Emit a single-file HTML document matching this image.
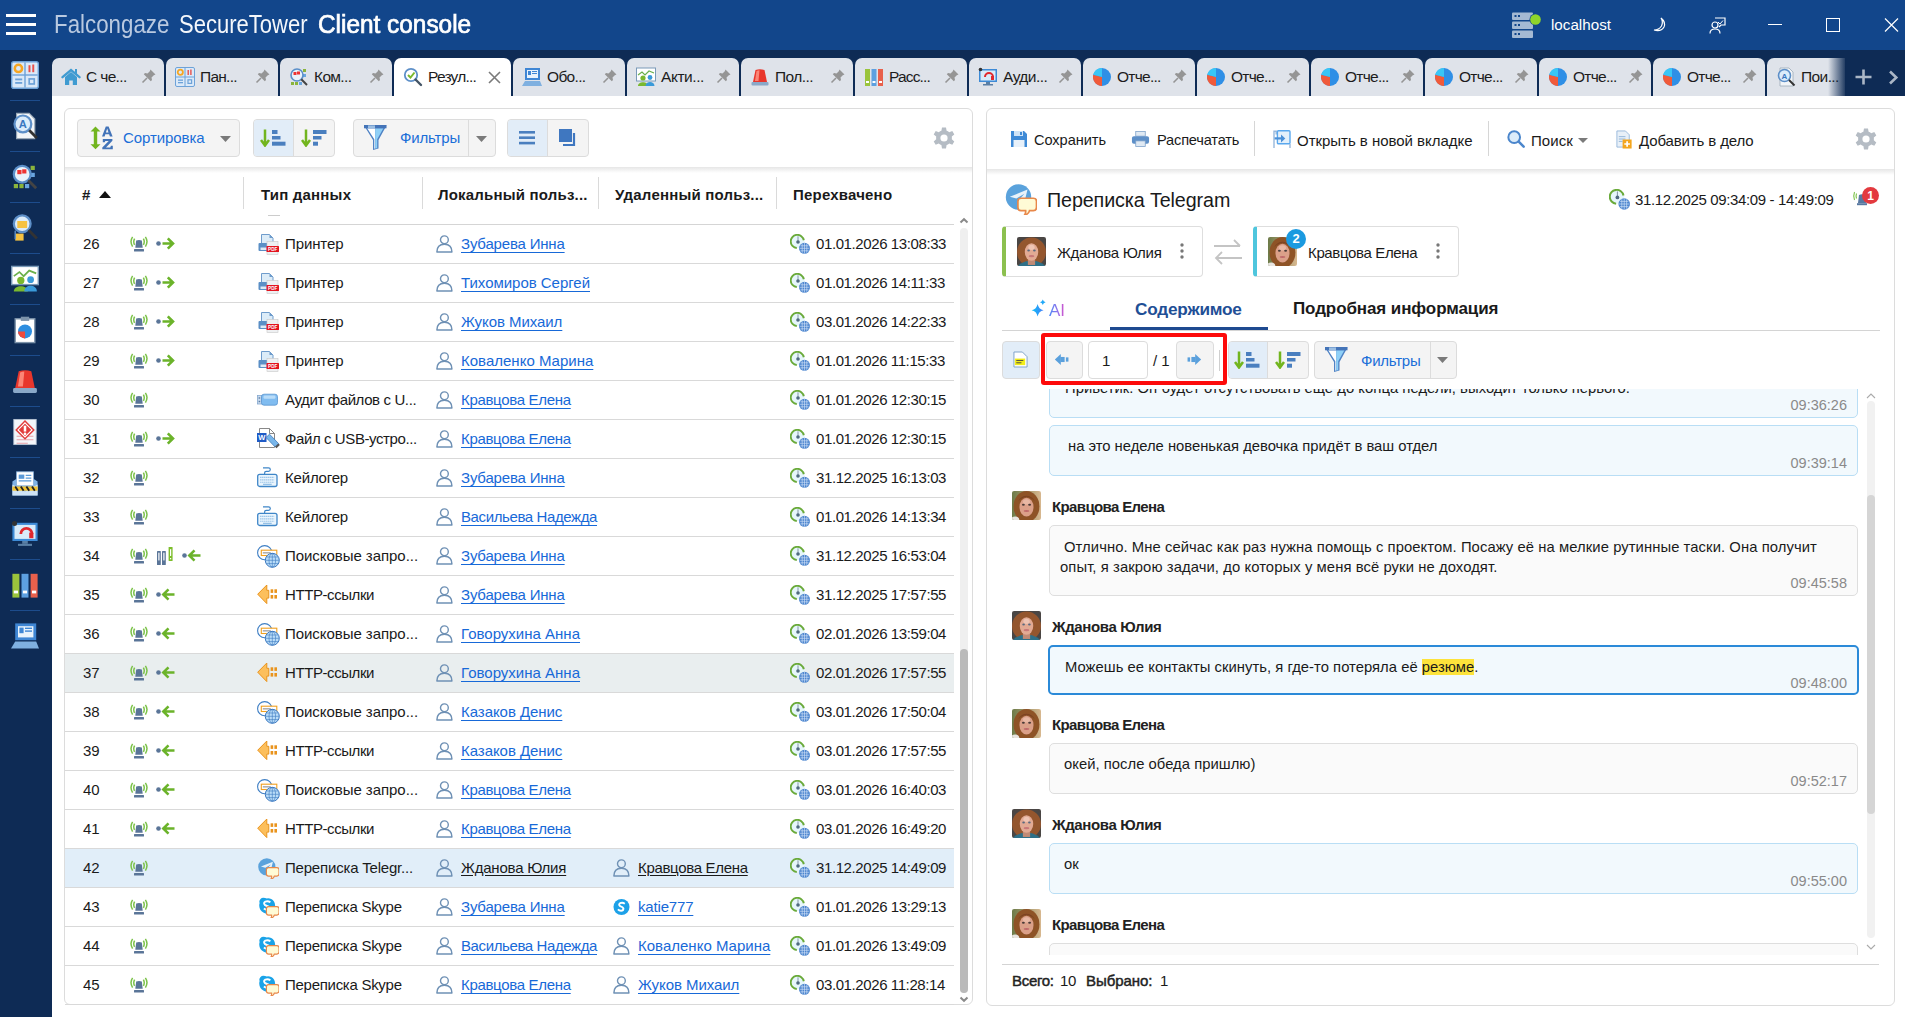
<!DOCTYPE html>
<html><head><meta charset="utf-8"><style>
*{box-sizing:border-box}
html,body{margin:0;padding:0}
body{width:1905px;height:1017px;overflow:hidden;position:relative;background:#fff;font-family:"Liberation Sans",sans-serif;color:#1a1a1a}
.a{position:absolute}
.nw{white-space:nowrap}
svg.i{position:absolute;overflow:visible}
#title{left:0;top:0;width:1905px;height:50px;background:#12468b}
#strip{left:0;top:50px;width:1905px;height:46px;background:#0e2b55}
#side{left:0;top:50px;width:52px;height:967px;background:#0e2b55}
.tab{position:absolute;top:58px;height:38px;background:#dfe3ea;border-radius:7px 7px 0 0;font-size:15.5px;color:#1c1c1c}
.tab.act{background:#fff}
.tab .tx{position:absolute;left:34px;top:10px;white-space:nowrap;letter-spacing:-0.2px}
.panel{position:absolute;background:#fff;border:1px solid #dcdcdc;border-radius:6px}
.sidesep{position:absolute;left:10px;width:30px;height:1px;background:#1d4c8c}
.btn{position:absolute;border:1px solid #dcdcdc;border-radius:4px;background:#f4f4f4}
.btn.sel{background:#e2edf8}
.row{position:absolute;left:1px;width:888px;height:39px;border-bottom:1px solid #d9d9d9;font-size:15px}
.row .c{position:absolute;top:10px;white-space:nowrap}
.lnk{color:#1769d8;text-decoration:underline;text-underline-offset:3px}
.hdr{position:absolute;top:0;font-size:15px;font-weight:bold;color:#1a1a1a;white-space:nowrap}
.tb{position:absolute;font-size:15px;white-space:nowrap;color:#1a1a1a}
.bub{position:absolute;left:1049px;width:809px;border:1px solid #b9def5;background:#f2f9fd;border-radius:5px;font-size:14.8px}
.bub.g{border-color:#dedede;background:#fafafa}
.bub .t{position:absolute;right:10px;font-size:14.5px;color:#8a8a8a}
.bub .m{position:absolute;left:18px;white-space:nowrap;letter-spacing:0.06px}
.who{position:absolute;left:1052px;font-size:15px;font-weight:bold;color:#222;white-space:nowrap;letter-spacing:-0.5px}
.av{position:absolute;left:1013px;width:29px;height:29px;border-radius:4px;overflow:hidden}
</style></head>
<body>

<svg width="0" height="0" style="position:absolute">
<defs><filter id="blr" x="-20%" y="-20%" width="140%" height="140%"><feGaussianBlur stdDeviation="0.75"/></filter><linearGradient id="kbg" x1="0" y1="0" x2="1" y2="0"><stop offset="0" stop-color="#6c7a48"/><stop offset="1" stop-color="#d8b890"/></linearGradient>
<symbol id="home" viewBox="0 0 20 20"><path d="M1.5 10.2 L10 3 L18.5 10.2" fill="none" stroke="#3f9bd1" stroke-width="2.3" stroke-linecap="round"/><rect x="14" y="2" width="2" height="5" fill="#3f9bd1"/><path d="M4 10 L10 5 L16 10 V18 H11.8 V13.5 H8.2 V18 H4Z" fill="#3f9bd1"/></symbol>
<symbol id="dash" viewBox="0 0 20 20"><rect x="0.5" y="0.5" width="19" height="19" rx="1.5" fill="#dbe9f8" stroke="#6da2d8"/><line x1="10" y1="1" x2="10" y2="19" stroke="#6da2d8"/><line x1="1" y1="10" x2="19" y2="10" stroke="#6da2d8"/><circle cx="5.3" cy="5.3" r="2.6" fill="none" stroke="#f5a623" stroke-width="1.8"/><rect x="12.5" y="3" width="1.4" height="5" fill="#e8504a"/><rect x="15.2" y="2.5" width="1.4" height="5.5" fill="#e8504a"/><rect x="3" y="12.5" width="5" height="1.3" fill="#6da2d8"/><rect x="3" y="15" width="5" height="1.3" fill="#6da2d8"/><rect x="13" y="12.8" width="3.6" height="3.6" fill="none" stroke="#6da2d8" stroke-width="1.2"/></symbol>
<symbol id="anl" viewBox="0 0 20 20"><rect x="2" y="15" width="3" height="3" fill="#8ab43c"/><rect x="6" y="15" width="3" height="3" fill="#8ab43c"/><rect x="14" y="2" width="3" height="3" fill="#8ab43c"/><rect x="14" y="7" width="3" height="3" fill="#6aa6e0"/><rect x="10" y="15" width="3" height="3" fill="#6aa6e0"/><circle cx="8" cy="8" r="6" fill="#e9f2fb" stroke="#5b8fc9" stroke-width="1.6"/><rect x="4.5" y="5" width="3" height="3" fill="#e33"/><rect x="8" y="4.5" width="3" height="3" fill="#e33"/><line x1="12.3" y1="12.3" x2="18" y2="18" stroke="#444" stroke-width="2"/></symbol>
<symbol id="srchk" viewBox="0 0 20 20"><circle cx="8" cy="8" r="6.2" fill="#fff" stroke="#5d8fc8" stroke-width="1.8"/><path d="M5 8 L7.5 10.5 L11.5 5.5" fill="none" stroke="#7ab82f" stroke-width="2"/><line x1="12.5" y1="12.5" x2="18" y2="18" stroke="#456" stroke-width="2.4" stroke-linecap="round"/></symbol>
<symbol id="laptop" viewBox="0 0 20 20"><rect x="3" y="1" width="15" height="12" fill="#3f86d4"/><rect x="5" y="3" width="11" height="8" fill="#e9f3fc"/><rect x="6" y="4" width="3" height="4" fill="#3f86d4"/><rect x="10" y="4" width="5" height="1" fill="#3f86d4"/><rect x="10" y="6" width="5" height="1" fill="#3f86d4"/><path d="M0 19 L3 14 H18 L20 19Z" fill="#7fb0e0"/></symbol>
<symbol id="pres" viewBox="0 0 20 20"><rect x="0.5" y="1" width="19" height="13" fill="#fff" stroke="#7a9ab8"/><path d="M2 8 L6 5 L9 8 L13 4 L18 6" fill="none" stroke="#6ab04c" stroke-width="1.2"/><circle cx="7" cy="11" r="2.6" fill="#7ab82f"/><path d="M2 19 C2 14 12 14 12 19Z" fill="#7ab82f"/><circle cx="14" cy="10.5" r="2.4" fill="#3a9ad9"/><path d="M9.5 19 C9.5 13.5 18.5 13.5 18.5 19Z" fill="#3a9ad9"/></symbol>
<symbol id="siren" viewBox="0 0 20 20"><path d="M3 15 L5.5 3 Q10 1.5 14.5 3 L17 15Z" fill="#e8362c"/><path d="M6.5 4 Q8 3.3 9.5 3.3 L8.5 14 H5Z" fill="#ff9a8a" opacity="0.8"/><rect x="1.5" y="15" width="17" height="3.5" rx="1" fill="#8aa8c8"/></symbol>
<symbol id="books" viewBox="0 0 20 20"><rect x="1" y="2" width="5" height="17" fill="#9ac43c"/><rect x="7.5" y="2" width="5" height="17" fill="#5da0e0"/><rect x="14" y="2" width="5" height="17" fill="#e8604c"/><rect x="2" y="14" width="3" height="2" fill="#fff"/><rect x="8.5" y="14" width="3" height="2" fill="#fff"/><rect x="15" y="14" width="3" height="2" fill="#fff"/></symbol>
<symbol id="mon" viewBox="0 0 20 20"><rect x="1" y="2" width="18" height="13" fill="#3d8ad6"/><rect x="2.5" y="3.5" width="15" height="10" fill="#d9ebf9"/><rect x="8" y="15" width="4" height="2" fill="#5a7fa5"/><rect x="5" y="17" width="10" height="1.5" fill="#5a7fa5"/><path d="M7 10 A4 4 0 1 1 15 10" fill="none" stroke="#e0282e" stroke-width="2"/><rect x="13" y="9" width="3" height="4" fill="#e0282e"/><circle cx="2.5" cy="2.5" r="1.8" fill="#333"/></symbol>
<symbol id="pie" viewBox="0 0 20 20"><circle cx="10" cy="10" r="9" fill="#2f8fe6"/><path d="M10 10 L10 19 A9 9 0 0 1 1.3 7.7Z" fill="#f05a3a"/><path d="M10 10 L1.3 7.7 A9 9 0 0 1 10 1Z" fill="#38c6f6"/></symbol>
<symbol id="srdoc" viewBox="0 0 20 20"><path d="M4 1 H13 L17 5 V19 H4Z" fill="#f2f5f8" stroke="#9aa9b8" stroke-width="0.8"/><circle cx="8.5" cy="8.5" r="6" fill="#dcecfa" stroke="#5d8fc8" stroke-width="1.6"/><text x="8.5" y="11.5" font-size="8" font-family="Liberation Sans" font-weight="bold" fill="#3a77c0" text-anchor="middle">A</text><line x1="13" y1="13" x2="18.5" y2="18.5" stroke="#333" stroke-width="2"/></symbol>
<symbol id="pin" viewBox="0 0 16 16"><path d="M9.5 1.5 L14.5 6.5 L12.8 7.2 L10.5 9.5 L11 12 L9.8 13.2 L2.8 6.2 L4 5 L6.5 5.5 L8.8 3.2Z" fill="#959595"/><line x1="6" y1="10" x2="1.5" y2="14.5" stroke="#959595" stroke-width="1.6"/></symbol>
<symbol id="fsr" viewBox="0 0 20 20"><circle cx="8" cy="7" r="6" fill="#dcecfa" stroke="#5d8fc8" stroke-width="1.6"/><rect x="4.5" y="5" width="7" height="5" fill="#f5c242"/><rect x="3" y="14" width="6" height="5" fill="#f5c242"/><line x1="3" y1="12" x2="3" y2="18" stroke="#5d8fc8"/><line x1="12.5" y1="11.5" x2="18.5" y2="17.5" stroke="#333" stroke-width="2"/></symbol>
<symbol id="clip" viewBox="0 0 20 20"><rect x="3" y="2" width="14" height="17" fill="#fff" stroke="#7d93aa"/><rect x="7" y="0.5" width="6" height="3" fill="#7d93aa"/><circle cx="10" cy="11" r="5" fill="#2e8ee0"/><path d="M10 11 L10 16 A5 5 0 0 1 5 11Z" fill="#ef4a3c"/></symbol>
<symbol id="warn" viewBox="0 0 20 20"><rect x="2" y="1" width="16" height="18" fill="#f4f6fa" stroke="#b8c4d4" stroke-width="0.6"/><path d="M4 13 H16 M4 15.5 H16 M4 18 H12" stroke="#e8a0a8" stroke-width="0.8"/><path d="M10 1.5 L17 8.5 L10 15.5 L3 8.5Z" fill="#e23b3b"/><path d="M10 3.5 L15 8.5 L10 13.5 L5 8.5Z" fill="none" stroke="#fff" stroke-width="0.8"/><rect x="9.1" y="5.5" width="1.8" height="4.2" fill="#fff"/><circle cx="10" cy="11.3" r="0.95" fill="#fff"/></symbol>
<symbol id="env" viewBox="0 0 20 20"><path d="M1 9 L10 3 L19 9 V19 H1Z" fill="#7fb2e5"/><rect x="4" y="2" width="12" height="10" fill="#fff" stroke="#8ab0d8" stroke-width="0.6"/><rect x="5.5" y="4" width="4" height="3" fill="#5a9ad8"/><path d="M10.5 4.5 H14.5 M10.5 6.5 H14.5 M5.5 8.5 H14.5" stroke="#5a9ad8" stroke-width="0.9"/><path d="M1 11 L10 16 L19 11 V19 H1Z" fill="#cfe3f6"/><rect x="1" y="12.5" width="18" height="3" fill="#f2c230"/><path d="M3 12.5 L5 15.5 M7 12.5 L9 15.5 M11 12.5 L13 15.5 M15 12.5 L17 15.5" stroke="#222" stroke-width="1.3"/></symbol>
<symbol id="sig" viewBox="0 0 18 16"><path d="M2.6 0.8 Q-0.6 5.5 2.6 10.6 M4.6 2.6 Q2.9 5.7 4.6 8.9 M15.4 0.8 Q18.6 5.5 15.4 10.6 M13.4 2.6 Q15.1 5.7 13.4 8.9" fill="none" stroke="#7cc24a" stroke-width="1.5"/><path d="M5.3 11.8 L6.2 4.4 Q9 3.6 11.8 4.4 L12.7 11.8Z" fill="#5a7598"/><rect x="4" y="13" width="10" height="2.6" rx="0.5" fill="#5a7598"/></symbol>
<symbol id="arR" viewBox="0 0 19 13"><circle cx="2.5" cy="6.5" r="2.3" fill="#5a7598"/><path d="M6.5 6.5 H17 M11.8 1.3 L17 6.5 L11.8 11.7" fill="none" stroke="#6bb32a" stroke-width="2.6"/></symbol>
<symbol id="arL" viewBox="0 0 19 13"><circle cx="2.5" cy="6.5" r="2.3" fill="#5a7598"/><path d="M18.5 6.5 H7.5 M12.5 1.3 L7.3 6.5 L12.5 11.7" fill="none" stroke="#6bb32a" stroke-width="2.6"/></symbol>
<symbol id="bk" viewBox="0 0 16 18"><rect x="0" y="4" width="3.8" height="14" rx="0.6" fill="#5a7598"/><rect x="1.3" y="5.5" width="1.2" height="8" rx="0.6" fill="#fff"/><rect x="5" y="4" width="3.8" height="14" rx="0.6" fill="#5a7598"/><rect x="6.3" y="5.5" width="1.2" height="8" rx="0.6" fill="#fff"/><rect x="11.6" y="0" width="4" height="14" rx="0.6" fill="#7cbd2a"/><rect x="13" y="2" width="1.2" height="7" rx="0.6" fill="#fff"/><rect x="13" y="11" width="1.2" height="1.3" fill="#fff"/></symbol>
<symbol id="prn" viewBox="0 0 21 21"><path d="M3.5 0.5 H11.5 L15 4 V13 H3.5Z" fill="#dcecf8" stroke="#6f9ccc" stroke-width="1"/><path d="M11.5 0.5 V4 H15" fill="#6f9ccc"/><rect x="0.5" y="9" width="11" height="8" rx="1" fill="#5b8fc6"/><rect x="2.5" y="13.5" width="7" height="2.5" fill="#dfeaf5"/><rect x="9" y="7.5" width="11" height="13" fill="#eef0f2" stroke="#c8c8c8" stroke-width="0.6"/><rect x="8.5" y="12" width="12.5" height="6" rx="0.6" fill="#e3141f"/><text x="14.7" y="16.7" font-size="4.6" font-family="Liberation Sans" font-weight="bold" fill="#fff" text-anchor="middle">PDF</text></symbol>
<symbol id="usb" viewBox="0 0 21 21"><rect x="0.5" y="6.5" width="4.5" height="8.5" fill="#c8daee" stroke="#86a8cf" stroke-width="0.8"/><rect x="1.6" y="8.3" width="1.6" height="1.4" fill="#5d7fa5"/><rect x="1.6" y="11.8" width="1.6" height="1.4" fill="#5d7fa5"/><rect x="4.5" y="5.2" width="16" height="11" rx="2.5" fill="#80bcf0" stroke="#5b95d0" stroke-width="0.8"/><rect x="6.5" y="6.6" width="12" height="3.2" rx="1.2" fill="#b9dcf8"/></symbol>
<symbol id="word" viewBox="0 0 23 21"><path d="M2.5 0.5 H12.5 L17.5 5.5 V19.5 H2.5Z" fill="#fff" stroke="#7a7a7a" stroke-width="0.9"/><path d="M12.5 0.5 V5.5 H17.5" fill="none" stroke="#7a7a7a" stroke-width="0.9"/><rect x="0" y="5" width="9.5" height="9" fill="#1f5bc6"/><text x="4.8" y="12.4" font-size="7.5" font-family="Liberation Sans" font-weight="bold" fill="#fff" text-anchor="middle">W</text><path d="M9 9.5 L12.5 6.2 L21.5 15.5 L18 18.8Z" fill="#78b6ea" stroke="#3f78b8" stroke-width="0.8"/><path d="M18 18.8 L21.5 15.5 L22.8 17 L19.5 20.3Z" fill="#555"/></symbol>
<symbol id="kbd" viewBox="0 0 21 21"><path d="M6 0.8 H11.5 Q13.3 0.8 13.3 2.6 Q13.3 4.4 11.5 4.4 H9.2 Q7.6 4.4 7.6 6 V7.3" fill="none" stroke="#3f86c8" stroke-width="1.2"/><rect x="0.7" y="7.3" width="19.3" height="12.2" rx="2" fill="#eaf5fd" stroke="#3f86c8" stroke-width="1.3"/><path d="M3.3 10.4 H17.4 M3.3 12.9 H17.4 M3.3 15.3 H17.4" stroke="#7fb3e0" stroke-width="1.1" stroke-dasharray="1.1 0.9"/><path d="M6 17.3 H14.7" stroke="#7fb3e0" stroke-width="1"/></symbol>
<symbol id="gsr" viewBox="0 0 23 23"><circle cx="7.7" cy="7.7" r="7.1" fill="#fff" stroke="#3f7fc4" stroke-width="1.1"/><rect x="4.3" y="5.2" width="15.5" height="5.3" fill="#fff" stroke="#f0a020" stroke-width="1.1"/><rect x="5.8" y="7" width="8" height="1.6" fill="#b0b0b0"/><circle cx="15.3" cy="15.3" r="7" fill="#b9dcf8" stroke="#3a78c0" stroke-width="1"/><path d="M8.6 15.3 H22 M15.3 8.5 V22 M9.5 12 H21 M9.5 18.6 H21" stroke="#3a78c0" stroke-width="0.6"/><ellipse cx="15.3" cy="15.3" rx="3.3" ry="6.8" fill="none" stroke="#3a78c0" stroke-width="0.6"/></symbol>
<symbol id="orarrow" viewBox="0 0 21 21"><path d="M0.7 10.2 L9.8 1 V6.3 H11.8 V14.1 H9.8 V19.6Z" fill="#fcbf5c" stroke="#e9931c" stroke-width="1"/><rect x="13.6" y="5.3" width="2.6" height="3.6" fill="#e9931c"/><rect x="17.4" y="5.3" width="2.6" height="3.6" fill="#e9931c"/><rect x="13.6" y="11" width="2.6" height="3.6" fill="#e9931c"/><rect x="17.4" y="11" width="2.6" height="3.6" fill="#e9931c"/></symbol>
<symbol id="tg" viewBox="0 0 20 20"><circle cx="8.4" cy="8.4" r="8.2" fill="#5aa2dc"/><path d="M2.8 8.2 L14.2 3.6 L12 12.5 L8.6 10.3 L12.2 6.3 L7 9.4Z" fill="#e8f2fa"/><path d="M10 9.2 H18 Q20 9.2 20 11.2 V15 Q20 17.2 18 17.2 H15.5 Q15 19.5 12.3 20 Q13.2 18.8 13 17.2 H10 Q8 17.2 8 15 V11.2 Q8 9.2 10 9.2Z" fill="#fffbd6" stroke="#e8884a" stroke-width="1.1"/></symbol>
<symbol id="sk" viewBox="0 0 20 20"><path d="M5 0.6 Q7 0.6 8.4 1.4 Q10.5 1 12.6 2 Q16 3.6 16.3 8 Q16.5 9.5 16 10.6 Q17 13 15 15 Q13 16.5 10.6 15.6 Q8 16.2 5.5 15 Q1.4 13 1.2 8.6 Q1 7.4 1.5 6 Q0.5 3.6 2.4 1.8 Q3.5 0.6 5 0.6Z" fill="#1aa3e8"/><path d="M11.8 5 Q9.5 3.5 7 4.4 Q5 5.5 6.4 7.4 Q8.5 8.6 10.2 9.3 Q11.5 10.5 10 11.8 Q7.8 12.6 5.6 11" fill="none" stroke="#fff" stroke-width="1.9"/><path d="M10 9.2 H18 Q20 9.2 20 11.2 V15 Q20 17.2 18 17.2 H15.5 Q15 19.5 12.3 20 Q13.2 18.8 13 17.2 H10 Q8 17.2 8 15 V11.2 Q8 9.2 10 9.2Z" fill="#fffbd6" stroke="#e8884a" stroke-width="1.1"/></symbol>
<symbol id="sks" viewBox="0 0 18 18"><circle cx="9" cy="9" r="8.5" fill="#1da1e8"/><path d="M12.5 5.5 Q10 3.8 7.5 5 Q5.5 6.3 7.5 8 Q10.5 9 11 10.5 Q11 13 8.5 13 Q6.5 13 5.2 11.5" fill="none" stroke="#fff" stroke-width="2"/></symbol>
<symbol id="usr" viewBox="0 0 17 18"><circle cx="8.4" cy="4.8" r="3.9" fill="none" stroke="#6f91b5" stroke-width="1.4"/><path d="M0.9 17 Q0.9 9.2 8.4 9.2 Q15.9 9.2 15.9 17Z" fill="none" stroke="#6f91b5" stroke-width="1.5" stroke-linejoin="round"/></symbol>
<symbol id="clk" viewBox="0 0 20 20"><circle cx="8" cy="7.5" r="6.6" fill="#e6f6fb"/><path d="M13.8 6.2 A6.6 6.6 0 1 0 6.8 14" fill="none" stroke="#6aaa3a" stroke-width="1.9"/><path d="M8 2.3 V7.5" stroke="#7a8a9a" stroke-width="0.9"/><circle cx="8" cy="8" r="1.8" fill="#4f6a80"/><circle cx="14.5" cy="14.3" r="5.5" fill="#4d86cf"/><path d="M9.5 14.3 H19.5 M14.5 9 V19.5 M10.5 11.8 H18.5 M10.5 16.8 H18.5 M12.2 9.8 V18.8 M16.8 9.8 V18.8" stroke="#d6e6f8" stroke-width="0.6"/></symbol>
<symbol id="gear" viewBox="0 0 24 24"><path d="M10 1 H14 L14.6 4.2 Q16 4.7 17.2 5.6 L20.3 4.4 L22.3 7.9 L19.8 10 Q20 11.2 19.8 12.6 L22.3 14.8 L20.3 18.2 L17.2 17 Q16 18 14.6 18.5 L14 21.8 H10 L9.4 18.5 Q8 18 6.8 17 L3.7 18.2 L1.7 14.8 L4.2 12.6 Q4 11.2 4.2 10 L1.7 7.9 L3.7 4.4 L6.8 5.6 Q8 4.7 9.4 4.2Z" fill="#b5bcc4" transform="translate(0 0.6)"/><circle cx="12" cy="12" r="3.6" fill="#fff"/></symbol>
<symbol id="funnel" viewBox="0 0 23 25"><path d="M0 0.5 H22.5 L14.5 15 V23.5 L9 25 V15Z" fill="#4f82c4"/><path d="M3.2 3.3 H11.2 V23.6 L10.3 23.8 V14.3Z" fill="#ffffff"/><path d="M11.2 3.3 H19.4 L13.2 14.3 V23.2 L11.2 23.6Z" fill="#8fd0f7"/><rect x="0" y="0" width="22.5" height="3.3" fill="#4474b8"/><rect x="4" y="0.4" width="7" height="2.6" fill="#9cbfe3"/></symbol>
<symbol id="sortaz" viewBox="0 0 24 24"><path d="M5.5 0.5 L0.5 5.5 H3.8 V18.2 H0.5 L5.5 23.3 L10.5 18.2 H7.2 V5.5 H10.5Z" fill="#72b51e"/><path fill-rule="evenodd" d="M12 10.5 L15.8 0.6 H18.6 L22.6 10.5 H19.9 L19.1 8.3 H15.3 L14.6 10.5Z M15.9 6.4 H18.5 L17.2 2.6Z" fill="#4273b8"/><path d="M12.8 13 H22.4 V14.8 L16 21.4 H20.3 L20.9 19.8 H22.8 V23.3 H12.3 V21.5 L18.7 14.9 H15.3 L14.8 16.2 H12.8Z" fill="#4273b8"/></symbol>
<symbol id="sasc" viewBox="0 0 26 18"><path d="M5 0.5 V15 M1 11 L5 16.5 L9 11" fill="none" stroke="#72b51e" stroke-width="2.5"/><rect x="12" y="1" width="5.5" height="4" fill="#4a7fbf"/><rect x="12" y="7" width="8.5" height="3.5" fill="#4a7fbf"/><rect x="12" y="12.7" width="13.5" height="4" fill="#4a7fbf"/></symbol>
<symbol id="sdesc" viewBox="0 0 26 18"><path d="M5 0.5 V15 M1 11 L5 16.5 L9 11" fill="none" stroke="#72b51e" stroke-width="2.5"/><rect x="12" y="1" width="13.5" height="4" fill="#4a7fbf"/><rect x="12" y="7" width="8.5" height="3.5" fill="#4a7fbf"/><rect x="12" y="12.7" width="5" height="4" fill="#4a7fbf"/></symbol>
<symbol id="save" viewBox="0 0 18 18"><path d="M1 1 H14 L17 4 V17 H1Z" fill="#3f8ad6"/><rect x="4" y="1" width="9" height="5" fill="#cfe3f6"/><rect x="10" y="2" width="2" height="3" fill="#3f8ad6"/><rect x="3.5" y="10" width="11" height="7" fill="#e8f1fa"/></symbol>
<symbol id="print" viewBox="0 0 20 18"><rect x="5" y="1" width="10" height="5" fill="#dfe9f3" stroke="#7b9fc8" stroke-width="0.8"/><rect x="1" y="6" width="18" height="8" rx="2" fill="#5d8fc8"/><rect x="5" y="11" width="10" height="6" fill="#dfe9f3" stroke="#7b9fc8" stroke-width="0.8"/></symbol>
<symbol id="newtab" viewBox="0 0 18 18"><path d="M1 18 V1.3 H3.2 V4.5" fill="none" stroke="#98b8dc" stroke-width="1.4"/><rect x="4.4" y="0.8" width="12.6" height="13" rx="1" fill="#e3f0fb" stroke="#5aa8ee" stroke-width="1.4"/><path d="M1.6 8.4 H8.5" stroke="#4a90d8" stroke-width="2.2"/><path d="M8 4.4 L12.3 8.4 L8 12.4Z" fill="#4a90d8"/><path d="M17 14 V18" stroke="#98b8dc" stroke-width="1.4"/></symbol>
<symbol id="mag" viewBox="0 0 20 20"><circle cx="8" cy="8" r="6.5" fill="#dcecfa" stroke="#4b86cc" stroke-width="2.2"/><line x1="13" y1="13" x2="18.5" y2="18.5" stroke="#4b86cc" stroke-width="2.8" stroke-linecap="round"/></symbol>
<symbol id="addc" viewBox="0 0 20 20"><path d="M2 1 H11 L15 5 V18 H2Z" fill="#e8f0f8" stroke="#8fb3d8" stroke-width="0.9"/><path d="M4 7 H11 M4 9.5 H11 M4 12 H8" stroke="#8fb3d8"/><rect x="8" y="10" width="9.5" height="9.5" fill="#f4a61e"/><path d="M12.75 11.8 V17.7 M9.8 14.75 H15.7" stroke="#fff" stroke-width="1.8"/></symbol>
<symbol id="note" viewBox="0 0 16 18"><path d="M1 1 H10 L15 6 V17 H1Z" fill="#fff" stroke="#7b9fc8" stroke-width="1"/><rect x="2" y="8" width="11" height="7" fill="#f3ee1a"/><path d="M3.5 10 H11 M3.5 12.5 H9" stroke="#444" stroke-width="1"/></symbol>
<symbol id="prev" viewBox="0 0 20 16"><path d="M1 8 L8 1.5 V14.5Z" fill="#5aa0dc"/><rect x="7.5" y="5" width="5" height="6" fill="#5aa0dc"/><rect x="14" y="5.5" width="3" height="5" fill="#5aa0dc"/></symbol>
<symbol id="next" viewBox="0 0 20 16"><path d="M19 8 L12 1.5 V14.5Z" fill="#5aa0dc"/><rect x="7.5" y="5" width="5" height="6" fill="#5aa0dc"/><rect x="3" y="5.5" width="3" height="5" fill="#5aa0dc"/></symbol>
<symbol id="ai" viewBox="0 0 18 18"><defs><linearGradient id="aig" x1="0" y1="0" x2="1" y2="0"><stop offset="0" stop-color="#08c0f8"/><stop offset="1" stop-color="#4a7ef8"/></linearGradient></defs><path d="M6.6 5 Q7.6 10.2 12.6 11.2 Q7.6 12.2 6.6 17.6 Q5.6 12.2 0.6 11.2 Q5.6 10.2 6.6 5Z" fill="url(#aig)"/><path d="M11.8 0.5 Q12.3 2.8 14.6 3.3 Q12.3 3.8 11.8 6.1 Q11.3 3.8 9 3.3 Q11.3 2.8 11.8 0.5Z" fill="#20a8f8"/></symbol>
<symbol id="swap" viewBox="0 0 32 32"><path d="M2 10 H28 M22 4 L28 10 M30 22 H4 M10 16 L4 22 L10 28" fill="none" stroke="#c4c4c4" stroke-width="1.8"/></symbol>
<symbol id="server" viewBox="0 0 30 27" overflow="visible"><rect x="0" y="0.5" width="21" height="7.5" rx="1" fill="#a4b9d3"/><rect x="0" y="9.5" width="21" height="7.5" rx="1" fill="#a4b9d3"/><rect x="0" y="18.5" width="21" height="7.5" rx="1" fill="#a4b9d3"/><rect x="2.5" y="3" width="2" height="2" fill="#12468b"/><rect x="6" y="3" width="2" height="2" fill="#12468b"/><rect x="2.5" y="12" width="2" height="2" fill="#12468b"/><rect x="6" y="12" width="2" height="2" fill="#12468b"/><rect x="2.5" y="21" width="2" height="2" fill="#12468b"/><rect x="6" y="21" width="2" height="2" fill="#12468b"/><circle cx="23.5" cy="7.5" r="6" fill="#12468b"/><circle cx="23.5" cy="7.5" r="5.3" fill="#8fd52a"/></symbol>
</defs></svg>

<div id="title" class="a">
<div class="a" style="left:6px;top:14px;width:30px;height:2.5px;background:#fff;box-shadow:0 9px 0 #fff,0 18px 0 #fff"></div>
<div class="a nw" style="left:54px;top:10px;font-size:25px;color:#b9c9e0;transform:scaleX(0.893);transform-origin:0 0">Falcongaze</div>
<div class="a nw" style="left:179px;top:10px;font-size:25px;color:#f4f7fb;transform:scaleX(0.881);transform-origin:0 0">SecureTower</div>
<div class="a nw" style="left:318px;top:10px;font-size:25px;color:#fff;-webkit-text-stroke:0.7px #fff;transform:scaleX(0.975);transform-origin:0 0">Client console</div>
<svg class="i" style="left:1512px;top:12px;" width="30" height="27"><use href="#server"/></svg>
<div class="a nw" style="left:1551px;top:16px;font-size:15.2px;color:#fff">localhost</div>
<svg class="i" style="left:1651px;top:17px" width="17" height="16" viewBox="0 0 17 16"><path d="M10 1 Q15 5 13 10 Q10 15 3 13 Q8 13 10.5 9 Q12.5 5 10 1Z" fill="none" stroke="#fff" stroke-width="1.2"/></svg>
<svg class="i" style="left:1709px;top:17px" width="18" height="17" viewBox="0 0 18 17"><circle cx="6" cy="8" r="3" fill="none" stroke="#fff" stroke-width="1.2"/><path d="M1 16.5 Q1 12 6 12 Q11 12 11 16.5" fill="none" stroke="#fff" stroke-width="1.2"/><path d="M6 1 H16 V8 H12 L10 10" fill="none" stroke="#fff" stroke-width="1.2"/><path d="M9 5 L11 7 L14 3.5" fill="none" stroke="#fff" stroke-width="1"/></svg>
<div class="a" style="left:1768px;top:24px;width:14px;height:1px;background:#fff"></div>
<div class="a" style="left:1826px;top:18px;width:14px;height:14px;border:1.2px solid #fff"></div>
<svg class="i" style="left:1884px;top:18px" width="15" height="14" viewBox="0 0 15 14"><path d="M1 0.5 L14 13.5 M14 0.5 L1 13.5" stroke="#fff" stroke-width="1.2"/></svg>
</div>
<div id="strip" class="a"></div>
<div id="side" class="a"></div>
<div class="tab" style="left:52px;width:112px">
<svg class="i" style="left:9px;top:9px;" width="20" height="20"><use href="#home"/></svg>
<div class="tx" style="letter-spacing:-0.645px">С че...</div>
<svg class="i" style="left:89px;top:10px;" width="16" height="16"><use href="#pin"/></svg>
</div>
<div class="tab" style="left:166px;width:112px">
<svg class="i" style="left:9px;top:9px;" width="20" height="20"><use href="#dash"/></svg>
<div class="tx" style="letter-spacing:-0.740px">Пан...</div>
<svg class="i" style="left:89px;top:10px;" width="16" height="16"><use href="#pin"/></svg>
</div>
<div class="tab" style="left:280px;width:112px">
<svg class="i" style="left:9px;top:9px;" width="20" height="20"><use href="#anl"/></svg>
<div class="tx" style="letter-spacing:-0.654px">Ком...</div>
<svg class="i" style="left:89px;top:10px;" width="16" height="16"><use href="#pin"/></svg>
</div>
<div class="tab act" style="left:394px;width:117px">
<svg class="i" style="left:9px;top:9px;" width="20" height="20"><use href="#srchk"/></svg>
<div class="tx" style="letter-spacing:-0.780px">Резул...</div>
<svg class="i" style="right:10px;top:13px" width="13" height="13" viewBox="0 0 13 13"><path d="M1 1 L12 12 M12 1 L1 12" stroke="#7a7a7a" stroke-width="1.6"/></svg>
</div>
<div class="tab" style="left:513px;width:112px">
<svg class="i" style="left:9px;top:9px;" width="20" height="20"><use href="#laptop"/></svg>
<div class="tx" style="letter-spacing:-0.662px">Обо...</div>
<svg class="i" style="left:89px;top:10px;" width="16" height="16"><use href="#pin"/></svg>
</div>
<div class="tab" style="left:627px;width:112px">
<svg class="i" style="left:9px;top:9px;" width="20" height="20"><use href="#pres"/></svg>
<div class="tx" style="letter-spacing:-0.424px">Акти...</div>
<svg class="i" style="left:89px;top:10px;" width="16" height="16"><use href="#pin"/></svg>
</div>
<div class="tab" style="left:741px;width:112px">
<svg class="i" style="left:9px;top:9px;" width="20" height="20"><use href="#siren"/></svg>
<div class="tx" style="letter-spacing:-0.580px">Пол...</div>
<svg class="i" style="left:89px;top:10px;" width="16" height="16"><use href="#pin"/></svg>
</div>
<div class="tab" style="left:855px;width:112px">
<svg class="i" style="left:9px;top:9px;" width="20" height="20"><use href="#books"/></svg>
<div class="tx" style="letter-spacing:-0.838px">Расс...</div>
<svg class="i" style="left:89px;top:10px;" width="16" height="16"><use href="#pin"/></svg>
</div>
<div class="tab" style="left:969px;width:112px">
<svg class="i" style="left:9px;top:9px;" width="20" height="20"><use href="#mon"/></svg>
<div class="tx" style="letter-spacing:-0.532px">Ауди...</div>
<svg class="i" style="left:89px;top:10px;" width="16" height="16"><use href="#pin"/></svg>
</div>
<div class="tab" style="left:1083px;width:112px">
<svg class="i" style="left:9px;top:9px;" width="20" height="20"><use href="#pie"/></svg>
<div class="tx" style="letter-spacing:-0.724px">Отче...</div>
<svg class="i" style="left:89px;top:10px;" width="16" height="16"><use href="#pin"/></svg>
</div>
<div class="tab" style="left:1197px;width:112px">
<svg class="i" style="left:9px;top:9px;" width="20" height="20"><use href="#pie"/></svg>
<div class="tx" style="letter-spacing:-0.724px">Отче...</div>
<svg class="i" style="left:89px;top:10px;" width="16" height="16"><use href="#pin"/></svg>
</div>
<div class="tab" style="left:1311px;width:112px">
<svg class="i" style="left:9px;top:9px;" width="20" height="20"><use href="#pie"/></svg>
<div class="tx" style="letter-spacing:-0.724px">Отче...</div>
<svg class="i" style="left:89px;top:10px;" width="16" height="16"><use href="#pin"/></svg>
</div>
<div class="tab" style="left:1425px;width:112px">
<svg class="i" style="left:9px;top:9px;" width="20" height="20"><use href="#pie"/></svg>
<div class="tx" style="letter-spacing:-0.724px">Отче...</div>
<svg class="i" style="left:89px;top:10px;" width="16" height="16"><use href="#pin"/></svg>
</div>
<div class="tab" style="left:1539px;width:112px">
<svg class="i" style="left:9px;top:9px;" width="20" height="20"><use href="#pie"/></svg>
<div class="tx" style="letter-spacing:-0.724px">Отче...</div>
<svg class="i" style="left:89px;top:10px;" width="16" height="16"><use href="#pin"/></svg>
</div>
<div class="tab" style="left:1653px;width:112px">
<svg class="i" style="left:9px;top:9px;" width="20" height="20"><use href="#pie"/></svg>
<div class="tx" style="letter-spacing:-0.724px">Отче...</div>
<svg class="i" style="left:89px;top:10px;" width="16" height="16"><use href="#pin"/></svg>
</div>
<div class="tab" style="left:1767px;width:112px">
<svg class="i" style="left:9px;top:9px;" width="20" height="20"><use href="#srdoc"/></svg>
<div class="tx" style="letter-spacing:-0.590px">Пои...</div>
<svg class="i" style="left:89px;top:10px;" width="16" height="16"><use href="#pin"/></svg>
</div>
<div class="a" style="left:1828px;top:58px;width:19px;height:38px;background:linear-gradient(90deg,rgba(14,43,85,0),#0e2b55)"></div>
<div class="a" style="left:1845px;top:58px;width:60px;height:38px;background:#0e2b55"></div>
<svg class="i" style="left:1855px;top:69px" width="17" height="16" viewBox="0 0 17 16"><path d="M8.5 0.5 V15.5 M0.5 8 H16.5" stroke="#aab6c6" stroke-width="2.6"/></svg>
<svg class="i" style="left:1888px;top:70px" width="11" height="15" viewBox="0 0 11 15"><path d="M2 1.5 L8.3 7.5 L2 13.5" fill="none" stroke="#aab6c6" stroke-width="2.6"/></svg>
<svg class="i" style="left:11px;top:61px;" width="28" height="28"><use href="#dash"/></svg>
<div class="sidesep" style="top:100px"></div>
<svg class="i" style="left:11px;top:112px;" width="28" height="28"><use href="#srdoc"/></svg>
<div class="sidesep" style="top:151px"></div>
<svg class="i" style="left:11px;top:163px;" width="28" height="28"><use href="#anl"/></svg>
<div class="sidesep" style="top:202px"></div>
<svg class="i" style="left:11px;top:214px;" width="28" height="28"><use href="#fsr"/></svg>
<div class="sidesep" style="top:253px"></div>
<svg class="i" style="left:11px;top:265px;" width="28" height="28"><use href="#pres"/></svg>
<div class="sidesep" style="top:304px"></div>
<svg class="i" style="left:11px;top:316px;" width="28" height="28"><use href="#clip"/></svg>
<div class="sidesep" style="top:355px"></div>
<svg class="i" style="left:11px;top:367px;" width="28" height="28"><use href="#siren"/></svg>
<div class="sidesep" style="top:406px"></div>
<svg class="i" style="left:11px;top:418px;" width="28" height="28"><use href="#warn"/></svg>
<div class="sidesep" style="top:457px"></div>
<svg class="i" style="left:11px;top:469px;" width="28" height="28"><use href="#env"/></svg>
<div class="sidesep" style="top:508px"></div>
<svg class="i" style="left:11px;top:520px;" width="28" height="28"><use href="#mon"/></svg>
<div class="sidesep" style="top:559px"></div>
<svg class="i" style="left:11px;top:571px;" width="28" height="28"><use href="#books"/></svg>
<div class="sidesep" style="top:610px"></div>
<svg class="i" style="left:11px;top:622px;" width="28" height="28"><use href="#laptop"/></svg>
<div class="panel" style="left:64px;top:108px;width:909px;height:897px"></div>
<div class="a" style="left:65px;top:167px;width:907px;height:6px;background:linear-gradient(#e6e6e6,rgba(255,255,255,0))"></div>
<div class="btn" style="left:77px;top:119px;width:163px;height:38px"></div>
<svg class="i" style="left:90px;top:126px;" width="24" height="24"><use href="#sortaz"/></svg>
<div class="tb" style="left:123px;top:129px;color:#1a6ed8;letter-spacing:-0.073px">Сортировка</div>
<svg class="i" style="left:220px;top:136px" width="11" height="6"><path d="M0 0 H11 L5.5 6Z" fill="#7a7a7a"/></svg>
<div class="btn" style="left:253px;top:119px;width:82px;height:38px;overflow:hidden"><div class="a" style="left:0;top:0;width:40px;height:38px;background:#e2edf8;border-right:1px solid #dcdcdc"></div></div>
<svg class="i" style="left:260px;top:129px;" width="26" height="18"><use href="#sasc"/></svg>
<svg class="i" style="left:301px;top:129px;" width="26" height="18"><use href="#sdesc"/></svg>
<div class="btn" style="left:353px;top:119px;width:143px;height:38px"><div class="a" style="left:114px;top:0;width:1px;height:36px;background:#dcdcdc"></div></div>
<svg class="i" style="left:364px;top:125px;" width="23" height="25"><use href="#funnel"/></svg>
<div class="tb" style="left:400px;top:129px;color:#1a6ed8;letter-spacing:-0.168px">Фильтры</div>
<svg class="i" style="left:476px;top:136px" width="11" height="6"><path d="M0 0 H11 L5.5 6Z" fill="#7a7a7a"/></svg>
<div class="btn" style="left:507px;top:119px;width:82px;height:38px;overflow:hidden"><div class="a" style="left:0;top:0;width:40px;height:38px;background:#e2edf8;border-right:1px solid #dcdcdc"></div></div>
<svg class="i" style="left:519px;top:131px" width="16" height="14"><rect x="0" y="0" width="16" height="2.6" fill="#4a7fbf"/><rect x="0" y="5.4" width="16" height="2.6" fill="#4a7fbf"/><rect x="0" y="10.8" width="16" height="2.6" fill="#4a7fbf"/></svg>
<svg class="i" style="left:559px;top:129px" width="18" height="18"><rect x="0" y="0" width="13" height="13" fill="#3f77c0"/><path d="M15 4 V16 H4" fill="none" stroke="#3f77c0" stroke-width="2.2"/></svg>
<svg class="i" style="left:932px;top:126px;" width="24" height="24"><use href="#gear"/></svg>
<div class="a" style="left:65px;top:224px;width:889px;height:1px;background:#d5d5d5"></div>
<div class="a" style="left:243px;top:177px;width:1px;height:32px;background:#dadada"></div>
<div class="a" style="left:422px;top:177px;width:1px;height:32px;background:#dadada"></div>
<div class="a" style="left:598px;top:177px;width:1px;height:32px;background:#dadada"></div>
<div class="a" style="left:776px;top:177px;width:1px;height:32px;background:#dadada"></div>
<div class="hdr" style="left:82px;top:186px;letter-spacing:0.2px">#</div>
<div class="hdr" style="left:261px;top:186px;letter-spacing:0.2px">Тип данных</div>
<div class="hdr" style="left:438px;top:186px;letter-spacing:0.2px">Локальный польз...</div>
<div class="hdr" style="left:615px;top:186px;letter-spacing:0.2px">Удаленный польз...</div>
<div class="hdr" style="left:793px;top:186px;letter-spacing:0.2px">Перехвачено</div>
<svg class="i" style="left:99px;top:191px" width="12" height="7"><path d="M0 7 H12 L6 0Z" fill="#111"/></svg>
<div class="a" style="left:268px;top:215px;width:12px;height:1px;background:#ccc"></div>
<div class="a" style="left:65px;top:225px;width:889px;height:39px;border-bottom:1px solid #d9d9d9"></div>
<div class="a nw" style="left:83px;top:235px;font-size:15px;color:#1a1a1a">26</div>
<svg class="i" style="left:130px;top:236px;" width="18" height="16"><use href="#sig"/></svg>
<svg class="i" style="left:156px;top:237px;" width="19" height="13"><use href="#arR"/></svg>
<svg class="i" style="left:258px;top:234px;" width="21" height="21"><use href="#prn"/></svg>
<div class="a nw" style="left:285px;top:235px;font-size:15px;letter-spacing:-0.110px">Принтер</div>
<svg class="i" style="left:436px;top:235px;" width="17" height="18"><use href="#usr"/></svg>
<div class="a nw lnk" style="left:461px;top:235px;font-size:15px;letter-spacing:-0.185px;">Зубарева Инна</div>
<svg class="i" style="left:790px;top:234px;" width="20" height="20"><use href="#clk"/></svg>
<div class="a nw" style="left:816px;top:235px;font-size:15px;letter-spacing:-0.4px">01.01.2026 13:08:33</div>
<div class="a" style="left:65px;top:264px;width:889px;height:39px;border-bottom:1px solid #d9d9d9"></div>
<div class="a nw" style="left:83px;top:274px;font-size:15px;color:#1a1a1a">27</div>
<svg class="i" style="left:130px;top:275px;" width="18" height="16"><use href="#sig"/></svg>
<svg class="i" style="left:156px;top:276px;" width="19" height="13"><use href="#arR"/></svg>
<svg class="i" style="left:258px;top:273px;" width="21" height="21"><use href="#prn"/></svg>
<div class="a nw" style="left:285px;top:274px;font-size:15px;letter-spacing:-0.110px">Принтер</div>
<svg class="i" style="left:436px;top:274px;" width="17" height="18"><use href="#usr"/></svg>
<div class="a nw lnk" style="left:461px;top:274px;font-size:15px;letter-spacing:-0.028px;">Тихомиров Сергей</div>
<svg class="i" style="left:790px;top:273px;" width="20" height="20"><use href="#clk"/></svg>
<div class="a nw" style="left:816px;top:274px;font-size:15px;letter-spacing:-0.4px">01.01.2026 14:11:33</div>
<div class="a" style="left:65px;top:303px;width:889px;height:39px;border-bottom:1px solid #d9d9d9"></div>
<div class="a nw" style="left:83px;top:313px;font-size:15px;color:#1a1a1a">28</div>
<svg class="i" style="left:130px;top:314px;" width="18" height="16"><use href="#sig"/></svg>
<svg class="i" style="left:156px;top:315px;" width="19" height="13"><use href="#arR"/></svg>
<svg class="i" style="left:258px;top:312px;" width="21" height="21"><use href="#prn"/></svg>
<div class="a nw" style="left:285px;top:313px;font-size:15px;letter-spacing:-0.110px">Принтер</div>
<svg class="i" style="left:436px;top:313px;" width="17" height="18"><use href="#usr"/></svg>
<div class="a nw lnk" style="left:461px;top:313px;font-size:15px;letter-spacing:-0.064px;">Жуков Михаил</div>
<svg class="i" style="left:790px;top:312px;" width="20" height="20"><use href="#clk"/></svg>
<div class="a nw" style="left:816px;top:313px;font-size:15px;letter-spacing:-0.4px">03.01.2026 14:22:33</div>
<div class="a" style="left:65px;top:342px;width:889px;height:39px;border-bottom:1px solid #d9d9d9"></div>
<div class="a nw" style="left:83px;top:352px;font-size:15px;color:#1a1a1a">29</div>
<svg class="i" style="left:130px;top:353px;" width="18" height="16"><use href="#sig"/></svg>
<svg class="i" style="left:156px;top:354px;" width="19" height="13"><use href="#arR"/></svg>
<svg class="i" style="left:258px;top:351px;" width="21" height="21"><use href="#prn"/></svg>
<div class="a nw" style="left:285px;top:352px;font-size:15px;letter-spacing:-0.110px">Принтер</div>
<svg class="i" style="left:436px;top:352px;" width="17" height="18"><use href="#usr"/></svg>
<div class="a nw lnk" style="left:461px;top:352px;font-size:15px;letter-spacing:0.006px;">Коваленко Марина</div>
<svg class="i" style="left:790px;top:351px;" width="20" height="20"><use href="#clk"/></svg>
<div class="a nw" style="left:816px;top:352px;font-size:15px;letter-spacing:-0.4px">01.01.2026 11:15:33</div>
<div class="a" style="left:65px;top:381px;width:889px;height:39px;border-bottom:1px solid #d9d9d9"></div>
<div class="a nw" style="left:83px;top:391px;font-size:15px;color:#1a1a1a">30</div>
<svg class="i" style="left:130px;top:392px;" width="18" height="16"><use href="#sig"/></svg>
<svg class="i" style="left:257px;top:389px;" width="21" height="21"><use href="#usb"/></svg>
<div class="a nw" style="left:285px;top:391px;font-size:15px;letter-spacing:-0.383px">Аудит файлов с U...</div>
<svg class="i" style="left:436px;top:391px;" width="17" height="18"><use href="#usr"/></svg>
<div class="a nw lnk" style="left:461px;top:391px;font-size:15px;letter-spacing:-0.321px;">Кравцова Елена</div>
<svg class="i" style="left:790px;top:390px;" width="20" height="20"><use href="#clk"/></svg>
<div class="a nw" style="left:816px;top:391px;font-size:15px;letter-spacing:-0.4px">01.01.2026 12:30:15</div>
<div class="a" style="left:65px;top:420px;width:889px;height:39px;border-bottom:1px solid #d9d9d9"></div>
<div class="a nw" style="left:83px;top:430px;font-size:15px;color:#1a1a1a">31</div>
<svg class="i" style="left:130px;top:431px;" width="18" height="16"><use href="#sig"/></svg>
<svg class="i" style="left:156px;top:432px;" width="19" height="13"><use href="#arR"/></svg>
<svg class="i" style="left:257px;top:428px;" width="23" height="21"><use href="#word"/></svg>
<div class="a nw" style="left:285px;top:430px;font-size:15px;letter-spacing:-0.407px">Файл с USB-устро...</div>
<svg class="i" style="left:436px;top:430px;" width="17" height="18"><use href="#usr"/></svg>
<div class="a nw lnk" style="left:461px;top:430px;font-size:15px;letter-spacing:-0.321px;">Кравцова Елена</div>
<svg class="i" style="left:790px;top:429px;" width="20" height="20"><use href="#clk"/></svg>
<div class="a nw" style="left:816px;top:430px;font-size:15px;letter-spacing:-0.4px">01.01.2026 12:30:15</div>
<div class="a" style="left:65px;top:459px;width:889px;height:39px;border-bottom:1px solid #d9d9d9"></div>
<div class="a nw" style="left:83px;top:469px;font-size:15px;color:#1a1a1a">32</div>
<svg class="i" style="left:130px;top:470px;" width="18" height="16"><use href="#sig"/></svg>
<svg class="i" style="left:257px;top:467px;" width="21" height="21"><use href="#kbd"/></svg>
<div class="a nw" style="left:285px;top:469px;font-size:15px;letter-spacing:-0.194px">Кейлогер</div>
<svg class="i" style="left:436px;top:469px;" width="17" height="18"><use href="#usr"/></svg>
<div class="a nw lnk" style="left:461px;top:469px;font-size:15px;letter-spacing:-0.185px;">Зубарева Инна</div>
<svg class="i" style="left:790px;top:468px;" width="20" height="20"><use href="#clk"/></svg>
<div class="a nw" style="left:816px;top:469px;font-size:15px;letter-spacing:-0.4px">31.12.2025 16:13:03</div>
<div class="a" style="left:65px;top:498px;width:889px;height:39px;border-bottom:1px solid #d9d9d9"></div>
<div class="a nw" style="left:83px;top:508px;font-size:15px;color:#1a1a1a">33</div>
<svg class="i" style="left:130px;top:509px;" width="18" height="16"><use href="#sig"/></svg>
<svg class="i" style="left:257px;top:506px;" width="21" height="21"><use href="#kbd"/></svg>
<div class="a nw" style="left:285px;top:508px;font-size:15px;letter-spacing:-0.194px">Кейлогер</div>
<svg class="i" style="left:436px;top:508px;" width="17" height="18"><use href="#usr"/></svg>
<div class="a nw lnk" style="left:461px;top:508px;font-size:15px;letter-spacing:-0.393px;">Васильева Надежда</div>
<svg class="i" style="left:790px;top:507px;" width="20" height="20"><use href="#clk"/></svg>
<div class="a nw" style="left:816px;top:508px;font-size:15px;letter-spacing:-0.4px">01.01.2026 14:13:34</div>
<div class="a" style="left:65px;top:537px;width:889px;height:39px;border-bottom:1px solid #d9d9d9"></div>
<div class="a nw" style="left:83px;top:547px;font-size:15px;color:#1a1a1a">34</div>
<svg class="i" style="left:130px;top:548px;" width="18" height="16"><use href="#sig"/></svg>
<svg class="i" style="left:157px;top:547px;" width="16" height="18"><use href="#bk"/></svg>
<svg class="i" style="left:182px;top:549px;" width="19" height="13"><use href="#arL"/></svg>
<svg class="i" style="left:257px;top:545px;" width="23" height="23"><use href="#gsr"/></svg>
<div class="a nw" style="left:285px;top:547px;font-size:15px;letter-spacing:-0.048px">Поисковые запро...</div>
<svg class="i" style="left:436px;top:547px;" width="17" height="18"><use href="#usr"/></svg>
<div class="a nw lnk" style="left:461px;top:547px;font-size:15px;letter-spacing:-0.185px;">Зубарева Инна</div>
<svg class="i" style="left:790px;top:546px;" width="20" height="20"><use href="#clk"/></svg>
<div class="a nw" style="left:816px;top:547px;font-size:15px;letter-spacing:-0.4px">31.12.2025 16:53:04</div>
<div class="a" style="left:65px;top:576px;width:889px;height:39px;border-bottom:1px solid #d9d9d9"></div>
<div class="a nw" style="left:83px;top:586px;font-size:15px;color:#1a1a1a">35</div>
<svg class="i" style="left:130px;top:587px;" width="18" height="16"><use href="#sig"/></svg>
<svg class="i" style="left:156px;top:588px;" width="19" height="13"><use href="#arL"/></svg>
<svg class="i" style="left:257px;top:584px;" width="21" height="21"><use href="#orarrow"/></svg>
<div class="a nw" style="left:285px;top:586px;font-size:15px;letter-spacing:-0.421px">HTTP-ссылки</div>
<svg class="i" style="left:436px;top:586px;" width="17" height="18"><use href="#usr"/></svg>
<div class="a nw lnk" style="left:461px;top:586px;font-size:15px;letter-spacing:-0.185px;">Зубарева Инна</div>
<svg class="i" style="left:790px;top:585px;" width="20" height="20"><use href="#clk"/></svg>
<div class="a nw" style="left:816px;top:586px;font-size:15px;letter-spacing:-0.4px">31.12.2025 17:57:55</div>
<div class="a" style="left:65px;top:615px;width:889px;height:39px;border-bottom:1px solid #d9d9d9"></div>
<div class="a nw" style="left:83px;top:625px;font-size:15px;color:#1a1a1a">36</div>
<svg class="i" style="left:130px;top:626px;" width="18" height="16"><use href="#sig"/></svg>
<svg class="i" style="left:156px;top:627px;" width="19" height="13"><use href="#arL"/></svg>
<svg class="i" style="left:257px;top:623px;" width="23" height="23"><use href="#gsr"/></svg>
<div class="a nw" style="left:285px;top:625px;font-size:15px;letter-spacing:-0.048px">Поисковые запро...</div>
<svg class="i" style="left:436px;top:625px;" width="17" height="18"><use href="#usr"/></svg>
<div class="a nw lnk" style="left:461px;top:625px;font-size:15px;letter-spacing:0.009px;">Говорухина Анна</div>
<svg class="i" style="left:790px;top:624px;" width="20" height="20"><use href="#clk"/></svg>
<div class="a nw" style="left:816px;top:625px;font-size:15px;letter-spacing:-0.4px">02.01.2026 13:59:04</div>
<div class="a" style="left:65px;top:654px;width:889px;height:39px;background:#e9eeef;border-bottom:1px solid #d9d9d9"></div>
<div class="a nw" style="left:83px;top:664px;font-size:15px;color:#1a1a1a">37</div>
<svg class="i" style="left:130px;top:665px;" width="18" height="16"><use href="#sig"/></svg>
<svg class="i" style="left:156px;top:666px;" width="19" height="13"><use href="#arL"/></svg>
<svg class="i" style="left:257px;top:662px;" width="21" height="21"><use href="#orarrow"/></svg>
<div class="a nw" style="left:285px;top:664px;font-size:15px;letter-spacing:-0.421px">HTTP-ссылки</div>
<svg class="i" style="left:436px;top:664px;" width="17" height="18"><use href="#usr"/></svg>
<div class="a nw lnk" style="left:461px;top:664px;font-size:15px;letter-spacing:0.009px;">Говорухина Анна</div>
<svg class="i" style="left:790px;top:663px;" width="20" height="20"><use href="#clk"/></svg>
<div class="a nw" style="left:816px;top:664px;font-size:15px;letter-spacing:-0.4px">02.01.2026 17:57:55</div>
<div class="a" style="left:65px;top:693px;width:889px;height:39px;border-bottom:1px solid #d9d9d9"></div>
<div class="a nw" style="left:83px;top:703px;font-size:15px;color:#1a1a1a">38</div>
<svg class="i" style="left:130px;top:704px;" width="18" height="16"><use href="#sig"/></svg>
<svg class="i" style="left:156px;top:705px;" width="19" height="13"><use href="#arL"/></svg>
<svg class="i" style="left:257px;top:701px;" width="23" height="23"><use href="#gsr"/></svg>
<div class="a nw" style="left:285px;top:703px;font-size:15px;letter-spacing:-0.048px">Поисковые запро...</div>
<svg class="i" style="left:436px;top:703px;" width="17" height="18"><use href="#usr"/></svg>
<div class="a nw lnk" style="left:461px;top:703px;font-size:15px;letter-spacing:-0.054px;">Казаков Денис</div>
<svg class="i" style="left:790px;top:702px;" width="20" height="20"><use href="#clk"/></svg>
<div class="a nw" style="left:816px;top:703px;font-size:15px;letter-spacing:-0.4px">03.01.2026 17:50:04</div>
<div class="a" style="left:65px;top:732px;width:889px;height:39px;border-bottom:1px solid #d9d9d9"></div>
<div class="a nw" style="left:83px;top:742px;font-size:15px;color:#1a1a1a">39</div>
<svg class="i" style="left:130px;top:743px;" width="18" height="16"><use href="#sig"/></svg>
<svg class="i" style="left:156px;top:744px;" width="19" height="13"><use href="#arL"/></svg>
<svg class="i" style="left:257px;top:740px;" width="21" height="21"><use href="#orarrow"/></svg>
<div class="a nw" style="left:285px;top:742px;font-size:15px;letter-spacing:-0.421px">HTTP-ссылки</div>
<svg class="i" style="left:436px;top:742px;" width="17" height="18"><use href="#usr"/></svg>
<div class="a nw lnk" style="left:461px;top:742px;font-size:15px;letter-spacing:-0.054px;">Казаков Денис</div>
<svg class="i" style="left:790px;top:741px;" width="20" height="20"><use href="#clk"/></svg>
<div class="a nw" style="left:816px;top:742px;font-size:15px;letter-spacing:-0.4px">03.01.2026 17:57:55</div>
<div class="a" style="left:65px;top:771px;width:889px;height:39px;border-bottom:1px solid #d9d9d9"></div>
<div class="a nw" style="left:83px;top:781px;font-size:15px;color:#1a1a1a">40</div>
<svg class="i" style="left:130px;top:782px;" width="18" height="16"><use href="#sig"/></svg>
<svg class="i" style="left:156px;top:783px;" width="19" height="13"><use href="#arL"/></svg>
<svg class="i" style="left:257px;top:779px;" width="23" height="23"><use href="#gsr"/></svg>
<div class="a nw" style="left:285px;top:781px;font-size:15px;letter-spacing:-0.048px">Поисковые запро...</div>
<svg class="i" style="left:436px;top:781px;" width="17" height="18"><use href="#usr"/></svg>
<div class="a nw lnk" style="left:461px;top:781px;font-size:15px;letter-spacing:-0.321px;">Кравцова Елена</div>
<svg class="i" style="left:790px;top:780px;" width="20" height="20"><use href="#clk"/></svg>
<div class="a nw" style="left:816px;top:781px;font-size:15px;letter-spacing:-0.4px">03.01.2026 16:40:03</div>
<div class="a" style="left:65px;top:810px;width:889px;height:39px;border-bottom:1px solid #d9d9d9"></div>
<div class="a nw" style="left:83px;top:820px;font-size:15px;color:#1a1a1a">41</div>
<svg class="i" style="left:130px;top:821px;" width="18" height="16"><use href="#sig"/></svg>
<svg class="i" style="left:156px;top:822px;" width="19" height="13"><use href="#arL"/></svg>
<svg class="i" style="left:257px;top:818px;" width="21" height="21"><use href="#orarrow"/></svg>
<div class="a nw" style="left:285px;top:820px;font-size:15px;letter-spacing:-0.421px">HTTP-ссылки</div>
<svg class="i" style="left:436px;top:820px;" width="17" height="18"><use href="#usr"/></svg>
<div class="a nw lnk" style="left:461px;top:820px;font-size:15px;letter-spacing:-0.321px;">Кравцова Елена</div>
<svg class="i" style="left:790px;top:819px;" width="20" height="20"><use href="#clk"/></svg>
<div class="a nw" style="left:816px;top:820px;font-size:15px;letter-spacing:-0.4px">03.01.2026 16:49:20</div>
<div class="a" style="left:65px;top:849px;width:889px;height:39px;background:#e1eef9;border-bottom:1px solid #d9d9d9"></div>
<div class="a nw" style="left:83px;top:859px;font-size:15px;color:#1a1a1a">42</div>
<svg class="i" style="left:130px;top:860px;" width="18" height="16"><use href="#sig"/></svg>
<svg class="i" style="left:258px;top:858px;" width="21" height="21"><use href="#tg"/></svg>
<div class="a nw" style="left:285px;top:859px;font-size:15px;letter-spacing:-0.197px">Переписка Telegr...</div>
<svg class="i" style="left:436px;top:859px;" width="17" height="18"><use href="#usr"/></svg>
<div class="a nw lnk" style="left:461px;top:859px;font-size:15px;letter-spacing:-0.201px;color:#1a1a1a;text-decoration:underline;text-underline-offset:2px">Жданова Юлия</div>
<svg class="i" style="left:613px;top:859px;" width="17" height="18"><use href="#usr"/></svg>
<div class="a nw lnk" style="left:638px;top:859px;font-size:15px;letter-spacing:-0.321px;color:#1a1a1a;text-decoration:underline;text-underline-offset:2px">Кравцова Елена</div>
<svg class="i" style="left:790px;top:858px;" width="20" height="20"><use href="#clk"/></svg>
<div class="a nw" style="left:816px;top:859px;font-size:15px;letter-spacing:-0.4px">31.12.2025 14:49:09</div>
<div class="a" style="left:65px;top:888px;width:889px;height:39px;border-bottom:1px solid #d9d9d9"></div>
<div class="a nw" style="left:83px;top:898px;font-size:15px;color:#1a1a1a">43</div>
<svg class="i" style="left:130px;top:899px;" width="18" height="16"><use href="#sig"/></svg>
<svg class="i" style="left:258px;top:897px;" width="21" height="21"><use href="#sk"/></svg>
<div class="a nw" style="left:285px;top:898px;font-size:15px;letter-spacing:-0.280px">Переписка Skype</div>
<svg class="i" style="left:436px;top:898px;" width="17" height="18"><use href="#usr"/></svg>
<div class="a nw lnk" style="left:461px;top:898px;font-size:15px;letter-spacing:-0.185px;">Зубарева Инна</div>
<svg class="i" style="left:613px;top:898px;" width="17" height="18"><use href="#sks"/></svg>
<div class="a nw lnk" style="left:638px;top:898px;font-size:15px;letter-spacing:-0.176px;">katie777</div>
<svg class="i" style="left:790px;top:897px;" width="20" height="20"><use href="#clk"/></svg>
<div class="a nw" style="left:816px;top:898px;font-size:15px;letter-spacing:-0.4px">01.01.2026 13:29:13</div>
<div class="a" style="left:65px;top:927px;width:889px;height:39px;border-bottom:1px solid #d9d9d9"></div>
<div class="a nw" style="left:83px;top:937px;font-size:15px;color:#1a1a1a">44</div>
<svg class="i" style="left:130px;top:938px;" width="18" height="16"><use href="#sig"/></svg>
<svg class="i" style="left:258px;top:936px;" width="21" height="21"><use href="#sk"/></svg>
<div class="a nw" style="left:285px;top:937px;font-size:15px;letter-spacing:-0.280px">Переписка Skype</div>
<svg class="i" style="left:436px;top:937px;" width="17" height="18"><use href="#usr"/></svg>
<div class="a nw lnk" style="left:461px;top:937px;font-size:15px;letter-spacing:-0.393px;">Васильева Надежда</div>
<svg class="i" style="left:613px;top:937px;" width="17" height="18"><use href="#usr"/></svg>
<div class="a nw lnk" style="left:638px;top:937px;font-size:15px;letter-spacing:0.006px;">Коваленко Марина</div>
<svg class="i" style="left:790px;top:936px;" width="20" height="20"><use href="#clk"/></svg>
<div class="a nw" style="left:816px;top:937px;font-size:15px;letter-spacing:-0.4px">01.01.2026 13:49:09</div>
<div class="a" style="left:65px;top:966px;width:889px;height:39px;border-bottom:1px solid #d9d9d9"></div>
<div class="a nw" style="left:83px;top:976px;font-size:15px;color:#1a1a1a">45</div>
<svg class="i" style="left:130px;top:977px;" width="18" height="16"><use href="#sig"/></svg>
<svg class="i" style="left:258px;top:975px;" width="21" height="21"><use href="#sk"/></svg>
<div class="a nw" style="left:285px;top:976px;font-size:15px;letter-spacing:-0.280px">Переписка Skype</div>
<svg class="i" style="left:436px;top:976px;" width="17" height="18"><use href="#usr"/></svg>
<div class="a nw lnk" style="left:461px;top:976px;font-size:15px;letter-spacing:-0.321px;">Кравцова Елена</div>
<svg class="i" style="left:613px;top:976px;" width="17" height="18"><use href="#usr"/></svg>
<div class="a nw lnk" style="left:638px;top:976px;font-size:15px;letter-spacing:-0.064px;">Жуков Михаил</div>
<svg class="i" style="left:790px;top:975px;" width="20" height="20"><use href="#clk"/></svg>
<div class="a nw" style="left:816px;top:976px;font-size:15px;letter-spacing:-0.4px">03.01.2026 11:28:14</div>
<div class="a" style="left:960px;top:228px;width:8px;height:765px;background:#efefef;border-radius:4px"></div>
<div class="a" style="left:960px;top:649px;width:8px;height:344px;background:#bababa;border-radius:4px"></div>
<svg class="i" style="left:959px;top:218px" width="10" height="6"><path d="M1.5 4.5 L5 1.2 L8.5 4.5" fill="none" stroke="#8a8a8a" stroke-width="2"/></svg>
<svg class="i" style="left:959px;top:996px" width="10" height="6"><path d="M1.5 1.5 L5 4.8 L8.5 1.5" fill="none" stroke="#8a8a8a" stroke-width="2"/></svg>
<div class="panel" style="left:986px;top:108px;width:909px;height:898px"></div>
<div class="a" style="left:987px;top:169px;width:907px;height:6px;background:linear-gradient(#e6e6e6,rgba(255,255,255,0))"></div>
<svg class="i" style="left:1010px;top:130px;" width="18" height="18"><use href="#save"/></svg>
<div class="tb" style="left:1034px;top:132px;font-size:14.6px;letter-spacing:-0.061px">Сохранить</div>
<svg class="i" style="left:1131px;top:130px;" width="19" height="18"><use href="#print"/></svg>
<div class="tb" style="left:1157px;top:132px;font-size:14.6px;letter-spacing:-0.176px">Распечатать</div>
<div class="a" style="left:1254px;top:121px;width:1px;height:35px;background:#d6d6d6"></div>
<svg class="i" style="left:1273px;top:130px;" width="18" height="18"><use href="#newtab"/></svg>
<div class="tb" style="left:1297px;top:132px;font-size:15px;letter-spacing:-0.028px">Открыть в новой вкладке</div>
<div class="a" style="left:1488px;top:121px;width:1px;height:35px;background:#d6d6d6"></div>
<svg class="i" style="left:1507px;top:130px;" width="18" height="18"><use href="#mag"/></svg>
<div class="tb" style="left:1531px;top:132px;font-size:15px;letter-spacing:0.087px">Поиск</div>
<svg class="i" style="left:1578px;top:138px" width="10" height="5"><path d="M0 0 H10 L5 5Z" fill="#7a7a7a"/></svg>
<svg class="i" style="left:1615px;top:130px;" width="19" height="19"><use href="#addc"/></svg>
<div class="tb" style="left:1639px;top:132px;font-size:15px;letter-spacing:-0.131px">Добавить в дело</div>
<svg class="i" style="left:1854px;top:127px;" width="24" height="24"><use href="#gear"/></svg>
<svg class="i" style="left:1005px;top:184px;" width="32" height="31"><use href="#tg"/></svg>
<div class="a nw" style="left:1047px;top:189px;font-size:19.7px;color:#1a1a1a;letter-spacing:-0.097px">Переписка Telegram</div>
<svg class="i" style="left:1609px;top:189px;" width="21" height="21"><use href="#clk"/></svg>
<div class="a nw" style="left:1635px;top:191px;font-size:15px;letter-spacing:-0.361px">31.12.2025 09:34:09 - 14:49:09</div>
<svg class="i" style="left:1853px;top:186px" width="28" height="20" viewBox="0 0 28 20"><path d="M1.5 6 Q0 10 1.5 14 M3.5 7.5 Q2.6 10 3.5 12.5" fill="none" stroke="#7cc24a" stroke-width="1.1"/><path d="M5 17 L6 9 Q9 7.5 12 9 L13 17Z" fill="#5878a0"/><rect x="4" y="17.2" width="10" height="2" fill="#5878a0"/><circle cx="17.5" cy="9.5" r="8.5" fill="#e33a3f"/><text x="17.5" y="13.8" font-size="12" font-family="Liberation Sans" font-weight="bold" fill="#fff" text-anchor="middle">1</text></svg>
<div class="a" style="left:1002px;top:226px;width:201px;height:51px;border:1px solid #dedede;border-left:4px solid #8cc04f;border-radius:4px"></div>
<svg class="i" style="left:1017px;top:237px" width="29" height="29" viewBox="0 0 28 28"><clipPath id="cpz1017237"><rect width="28" height="28" rx="2"/></clipPath><g clip-path="url(#cpz1017237)"><rect width="28" height="28" fill="#4a4644"/><g filter="url(#blr)"><ellipse cx="14" cy="14.5" rx="14" ry="14" fill="#94562f"/><ellipse cx="14" cy="31" rx="14" ry="8" fill="#2e7088"/><rect x="10.5" y="21" width="7" height="6" fill="#c08a74"/><ellipse cx="14" cy="14.5" rx="6.5" ry="8.5" fill="#e2aa94"/><ellipse cx="14" cy="10" rx="3" ry="2.5" fill="#eec4b4"/><ellipse cx="11.2" cy="13" rx="1.3" ry="0.9" fill="#5a6a80"/><ellipse cx="16.8" cy="13" rx="1.3" ry="0.9" fill="#5a6a80"/><ellipse cx="14" cy="18.5" rx="2.8" ry="1.1" fill="#c87878"/></g></g></svg>
<div class="a nw" style="left:1057px;top:244px;font-size:15px;letter-spacing:-0.260px">Жданова Юлия</div>
<svg class="i" style="left:1180px;top:243px" width="4" height="16"><circle cx="2" cy="2" r="1.7" fill="#777"/><circle cx="2" cy="8" r="1.7" fill="#777"/><circle cx="2" cy="14" r="1.7" fill="#777"/></svg>
<svg class="i" style="left:1212px;top:236px;" width="32" height="32"><use href="#swap"/></svg>
<div class="a" style="left:1253px;top:226px;width:206px;height:51px;border:1px solid #dedede;border-left:4px solid #4fc6dd;border-radius:4px"></div>
<svg class="i" style="left:1268px;top:237px" width="29" height="29" viewBox="0 0 28 28"><clipPath id="cpk1268237"><rect width="28" height="28" rx="2"/></clipPath><g clip-path="url(#cpk1268237)"><rect width="28" height="28" fill="url(#kbg)"/><g filter="url(#blr)"><ellipse cx="14" cy="15" rx="12.5" ry="15" fill="#8e5228"/><ellipse cx="3" cy="28" rx="4" ry="3.5" fill="#e8e4e0"/><ellipse cx="14" cy="15.5" rx="6.8" ry="9" fill="#dba089"/><ellipse cx="14" cy="10.5" rx="3.5" ry="2.5" fill="#e8b8a4"/><path d="M6 10 Q14 1 22 10 Q20 5 14 4.5 Q8 5 6 10Z" fill="#7a4220"/><ellipse cx="11" cy="13.3" rx="1.4" ry="0.9" fill="#4a3a38"/><ellipse cx="17" cy="13.3" rx="1.4" ry="0.9" fill="#4a3a38"/><ellipse cx="14" cy="19.3" rx="2.8" ry="1" fill="#c06a6a"/></g></g></svg>
<div class="a" style="left:1286px;top:229px;width:20px;height:20px;border-radius:50%;background:#1b9ae0;color:#fff;font-size:13px;font-weight:bold;text-align:center;line-height:20px">2</div>
<div class="a nw" style="left:1308px;top:244px;font-size:15px;letter-spacing:-0.356px">Кравцова Елена</div>
<svg class="i" style="left:1436px;top:243px" width="4" height="16"><circle cx="2" cy="2" r="1.7" fill="#777"/><circle cx="2" cy="8" r="1.7" fill="#777"/><circle cx="2" cy="14" r="1.7" fill="#777"/></svg>
<svg class="i" style="left:1031px;top:299px;" width="18" height="18"><use href="#ai"/></svg>
<div class="a nw" style="left:1049px;top:301px;font-size:17px;background:linear-gradient(90deg,#4a8af8,#9a70e8 60%,#d84ec8);-webkit-background-clip:text;color:transparent">AI</div>
<div class="a nw" style="left:1135px;top:299px;font-size:17.2px;font-weight:bold;color:#1f4f96;letter-spacing:-0.200px">Содержимое</div>
<div class="a nw" style="left:1293px;top:299px;font-size:17px;font-weight:bold;color:#1a1a1a;letter-spacing:-0.102px">Подробная информация</div>
<div class="a" style="left:1002px;top:330px;width:878px;height:1px;background:#d4d4d4"></div>
<div class="a" style="left:1110px;top:327px;width:158px;height:3px;background:#1e4a90"></div>
<div class="btn sel" style="left:1002px;top:341px;width:38px;height:38px"></div>
<svg class="i" style="left:1013px;top:351px;" width="15" height="17"><use href="#note"/></svg>
<div class="btn" style="left:1046px;top:341px;width:37px;height:38px"></div>
<svg class="i" style="left:1054px;top:352px;" width="17" height="15"><use href="#prev"/></svg>
<div class="a" style="left:1088px;top:341px;width:60px;height:38px;border:1px solid #dcdcdc;border-radius:4px;background:#fff"></div>
<div class="a nw" style="left:1102px;top:352px;font-size:15px">1</div>
<div class="a nw" style="left:1153px;top:352px;font-size:15px">/ 1</div>
<div class="btn" style="left:1176px;top:341px;width:38px;height:38px"></div>
<svg class="i" style="left:1185px;top:352px;" width="17" height="15"><use href="#next"/></svg>
<div class="a" style="left:1219px;top:350px;width:1px;height:21px;background:#cfcfcf"></div>
<div class="a" style="left:1041px;top:333px;width:186px;height:52px;border:4px solid #fd0a0a;border-radius:3px"></div>
<div class="btn" style="left:1228px;top:341px;width:81px;height:38px;overflow:hidden"><div class="a" style="left:0;top:0;width:39px;height:38px;background:#e2edf8;border-right:1px solid #dcdcdc"></div></div>
<svg class="i" style="left:1234px;top:351px;" width="26" height="18"><use href="#sasc"/></svg>
<svg class="i" style="left:1275px;top:351px;" width="26" height="18"><use href="#sdesc"/></svg>
<div class="btn" style="left:1314px;top:341px;width:143px;height:38px"><div class="a" style="left:115px;top:0;width:1px;height:36px;background:#dcdcdc"></div></div>
<svg class="i" style="left:1325px;top:347px;" width="23" height="25"><use href="#funnel"/></svg>
<div class="tb" style="left:1361px;top:352px;color:#1a6ed8;letter-spacing:-0.239px">Фильтры</div>
<svg class="i" style="left:1437px;top:357px" width="11" height="6"><path d="M0 0 H11 L5.5 6Z" fill="#7a7a7a"/></svg>
<div class="a" style="left:987px;top:389px;width:907px;height:566px;overflow:hidden">
<div class="bub " style="left:62px;top:-21px;width:809px;height:50px;"><div class="m" style="top:11px;left:15px;letter-spacing:0.028px">Приветик. Он будет отсутствовать еще до конца недели, выходит только первого.</div><div class="t" style="top:28px">09:36:26</div></div>
<div class="bub " style="left:62px;top:36px;width:809px;height:51px;"><div class="m" style="top:12px;letter-spacing:-0.014px">на это неделе новенькая девочка придёт в ваш отдел</div><div class="t" style="top:29px">09:39:14</div></div>
<svg class="i" style="left:25px;top:102px" width="29" height="29" viewBox="0 0 28 28"><clipPath id="cpk1012491"><rect width="28" height="28" rx="2"/></clipPath><g clip-path="url(#cpk1012491)"><rect width="28" height="28" fill="url(#kbg)"/><g filter="url(#blr)"><ellipse cx="14" cy="15" rx="12.5" ry="15" fill="#8e5228"/><ellipse cx="3" cy="28" rx="4" ry="3.5" fill="#e8e4e0"/><ellipse cx="14" cy="15.5" rx="6.8" ry="9" fill="#dba089"/><ellipse cx="14" cy="10.5" rx="3.5" ry="2.5" fill="#e8b8a4"/><path d="M6 10 Q14 1 22 10 Q20 5 14 4.5 Q8 5 6 10Z" fill="#7a4220"/><ellipse cx="11" cy="13.3" rx="1.4" ry="0.9" fill="#4a3a38"/><ellipse cx="17" cy="13.3" rx="1.4" ry="0.9" fill="#4a3a38"/><ellipse cx="14" cy="19.3" rx="2.8" ry="1" fill="#c06a6a"/></g></g></svg><div class="who" style="left:65px;top:109px;letter-spacing:-0.620px">Кравцова Елена</div>
<div class="bub g" style="left:62px;top:136px;width:809px;height:71px;"><div class="m" style="top:13px;left:14px;letter-spacing:0.073px">Отлично. Мне сейчас как раз нужна помощь с проектом. Посажу её на мелкие рутинные таски. Она получит</div><div class="m" style="top:33px;left:10px;letter-spacing:0.085px">опыт, я закрою задачи, до которых у меня всё руки не доходят.</div><div class="t" style="top:49px">09:45:58</div></div>
<svg class="i" style="left:25px;top:222px" width="29" height="29" viewBox="0 0 28 28"><clipPath id="cpz1012611"><rect width="28" height="28" rx="2"/></clipPath><g clip-path="url(#cpz1012611)"><rect width="28" height="28" fill="#4a4644"/><g filter="url(#blr)"><ellipse cx="14" cy="14.5" rx="14" ry="14" fill="#94562f"/><ellipse cx="14" cy="31" rx="14" ry="8" fill="#2e7088"/><rect x="10.5" y="21" width="7" height="6" fill="#c08a74"/><ellipse cx="14" cy="14.5" rx="6.5" ry="8.5" fill="#e2aa94"/><ellipse cx="14" cy="10" rx="3" ry="2.5" fill="#eec4b4"/><ellipse cx="11.2" cy="13" rx="1.3" ry="0.9" fill="#5a6a80"/><ellipse cx="16.8" cy="13" rx="1.3" ry="0.9" fill="#5a6a80"/><ellipse cx="14" cy="18.5" rx="2.8" ry="1.1" fill="#c87878"/></g></g></svg><div class="who" style="left:65px;top:229px;letter-spacing:-0.356px">Жданова Юлия</div>
<div class="bub " style="left:61px;top:256px;width:811px;height:50px;border:2px solid #2b8ad8"><div class="m" style="top:12px;left:15px;letter-spacing:0.030px">Можешь ее контакты скинуть, я где-то потеряла её <span style="background:#fde33b">резюме</span>.</div><div class="t" style="top:28px">09:48:00</div></div>
<svg class="i" style="left:25px;top:320px" width="29" height="29" viewBox="0 0 28 28"><clipPath id="cpk1012709"><rect width="28" height="28" rx="2"/></clipPath><g clip-path="url(#cpk1012709)"><rect width="28" height="28" fill="url(#kbg)"/><g filter="url(#blr)"><ellipse cx="14" cy="15" rx="12.5" ry="15" fill="#8e5228"/><ellipse cx="3" cy="28" rx="4" ry="3.5" fill="#e8e4e0"/><ellipse cx="14" cy="15.5" rx="6.8" ry="9" fill="#dba089"/><ellipse cx="14" cy="10.5" rx="3.5" ry="2.5" fill="#e8b8a4"/><path d="M6 10 Q14 1 22 10 Q20 5 14 4.5 Q8 5 6 10Z" fill="#7a4220"/><ellipse cx="11" cy="13.3" rx="1.4" ry="0.9" fill="#4a3a38"/><ellipse cx="17" cy="13.3" rx="1.4" ry="0.9" fill="#4a3a38"/><ellipse cx="14" cy="19.3" rx="2.8" ry="1" fill="#c06a6a"/></g></g></svg><div class="who" style="left:65px;top:327px;letter-spacing:-0.620px">Кравцова Елена</div>
<div class="bub g" style="left:62px;top:354px;width:809px;height:51px;"><div class="m" style="top:12px;left:14px;letter-spacing:0.032px">окей, после обеда пришлю)</div><div class="t" style="top:29px">09:52:17</div></div>
<svg class="i" style="left:25px;top:420px" width="29" height="29" viewBox="0 0 28 28"><clipPath id="cpz1012809"><rect width="28" height="28" rx="2"/></clipPath><g clip-path="url(#cpz1012809)"><rect width="28" height="28" fill="#4a4644"/><g filter="url(#blr)"><ellipse cx="14" cy="14.5" rx="14" ry="14" fill="#94562f"/><ellipse cx="14" cy="31" rx="14" ry="8" fill="#2e7088"/><rect x="10.5" y="21" width="7" height="6" fill="#c08a74"/><ellipse cx="14" cy="14.5" rx="6.5" ry="8.5" fill="#e2aa94"/><ellipse cx="14" cy="10" rx="3" ry="2.5" fill="#eec4b4"/><ellipse cx="11.2" cy="13" rx="1.3" ry="0.9" fill="#5a6a80"/><ellipse cx="16.8" cy="13" rx="1.3" ry="0.9" fill="#5a6a80"/><ellipse cx="14" cy="18.5" rx="2.8" ry="1.1" fill="#c87878"/></g></g></svg><div class="who" style="left:65px;top:427px;letter-spacing:-0.356px">Жданова Юлия</div>
<div class="bub " style="left:62px;top:454px;width:809px;height:51px;"><div class="m" style="top:12px;left:14px">ок</div><div class="t" style="top:29px">09:55:00</div></div>
<svg class="i" style="left:25px;top:520px" width="29" height="29" viewBox="0 0 28 28"><clipPath id="cpk1012909"><rect width="28" height="28" rx="2"/></clipPath><g clip-path="url(#cpk1012909)"><rect width="28" height="28" fill="url(#kbg)"/><g filter="url(#blr)"><ellipse cx="14" cy="15" rx="12.5" ry="15" fill="#8e5228"/><ellipse cx="3" cy="28" rx="4" ry="3.5" fill="#e8e4e0"/><ellipse cx="14" cy="15.5" rx="6.8" ry="9" fill="#dba089"/><ellipse cx="14" cy="10.5" rx="3.5" ry="2.5" fill="#e8b8a4"/><path d="M6 10 Q14 1 22 10 Q20 5 14 4.5 Q8 5 6 10Z" fill="#7a4220"/><ellipse cx="11" cy="13.3" rx="1.4" ry="0.9" fill="#4a3a38"/><ellipse cx="17" cy="13.3" rx="1.4" ry="0.9" fill="#4a3a38"/><ellipse cx="14" cy="19.3" rx="2.8" ry="1" fill="#c06a6a"/></g></g></svg><div class="who" style="left:65px;top:527px;letter-spacing:-0.620px">Кравцова Елена</div>
<div class="bub g" style="left:62px;top:554px;width:809px;height:51px;"></div>
</div>
<div class="a" style="left:1867px;top:401px;width:8px;height:537px;background:#f1f1f1;border-radius:4px"></div>
<div class="a" style="left:1867px;top:495px;width:8px;height:319px;background:#d5d5d5;border-radius:4px"></div>
<svg class="i" style="left:1866px;top:393px" width="10" height="6"><path d="M1 5 L5 1 L9 5" fill="none" stroke="#aaa" stroke-width="1.1"/></svg>
<svg class="i" style="left:1866px;top:944px" width="10" height="6"><path d="M1 1 L5 5 L9 1" fill="none" stroke="#aaa" stroke-width="1.1"/></svg>
<div class="a" style="left:1002px;top:964px;width:877px;height:1px;background:#d4d4d4"></div>
<div class="a nw" style="left:1012px;top:972px;font-size:15px;-webkit-text-stroke:0.45px #222;letter-spacing:-0.3px;color:#222">Всего:</div>
<div class="a nw" style="left:1060px;top:972px;font-size:15px;letter-spacing:-0.3px">10</div>
<div class="a nw" style="left:1086px;top:972px;font-size:15px;-webkit-text-stroke:0.45px #222;letter-spacing:-0.06px;color:#222">Выбрано:</div>
<div class="a nw" style="left:1160px;top:972px;font-size:15px">1</div>
</body></html>
